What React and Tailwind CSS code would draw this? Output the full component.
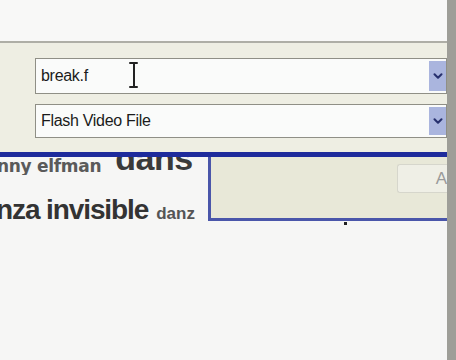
import { ChevronDown } from "lucide-react";

function Combo({ value, cursor, h }) {
  return (
    <div
      className={`flex items-stretch border border-[#8f8f86] bg-[#fafbfa] ${h}`}
    >
      <div className="relative flex flex-1 items-center pl-[5px] text-[16px] text-[#1b1b1b] tracking-[-0.3px]">
        {value}
        {cursor && (
          <span className="absolute left-[93px] top-[3px] flex h-[26px] w-[9px] flex-col items-center">
            <span className="h-[2px] w-[9px] rounded-full bg-[#222]" />
            <span className="w-[2px] flex-1 bg-[#222]" />
            <span className="h-[2px] w-[9px] rounded-full bg-[#222]" />
          </span>
        )}
      </div>
      <div className="my-[2px] flex w-[17px] items-center justify-center bg-[#aab5de]">
        <ChevronDown className="h-[14px] w-[14px] text-[#27306e]" strokeWidth={3.5} />
      </div>
    </div>
  );
}

export default function App() {
  return (
    <div
      className="flex h-[360px] w-[456px] overflow-hidden bg-[#f6f6f5]"
      style={{ fontFamily: '"Liberation Sans", Arial, sans-serif' }}
    >
      <div className="flex w-[447px] flex-col">
        <div className="h-[41px] bg-[#f8f8f7]" />
        <div className="h-[2px] bg-[#aeaea6]" />
        <div className="flex h-[109px] flex-col gap-[10px] bg-[#eeeee3] pl-[35px] pt-[15px]">
          <Combo value="break.f" cursor h="h-[36px]" />
          <Combo value="Flash Video File" h="h-[34px]" />
        </div>
        <div className="h-[5px] bg-[#1e2b9c]" />
        <div className="flex">
          <div className="flex w-[208px] flex-col overflow-hidden font-bold">
            <div className="flex h-[18px] items-end overflow-hidden whitespace-nowrap leading-none">
              <span
                className="ml-[-3px] text-[17px] text-[#5a5a5a] tracking-[-0.3px]"
                style={{ fontFamily: '"DejaVu Sans", sans-serif' }}
              >
                nny elfman
              </span>
              <span className="ml-[14px] mb-0 text-[34px] text-[#3a3a3a] tracking-[-0.5px]">dans</span>
            </div>
            <div className="mt-[21px] flex items-end whitespace-nowrap leading-none">
              <span className="ml-[-4px] text-[28px] text-[#333] tracking-[-1.1px]">nza invisible</span>
              <span className="ml-[8px] mb-[2px] text-[17px] text-[#555]">danz</span>
            </div>
          </div>
          <div className="flex flex-1 flex-col">
            <div className="flex h-[64px] border-b-[3px] border-l-[3px] border-[#4a56aa] bg-[#e8e8d8] pt-[7px]">
              <div className="flex-1" />
              <div className="flex h-[29px] w-[50px] items-center justify-end rounded-l-[3px] border border-r-0 border-[#d6d6cc] bg-[#efefe6] text-[17px] text-[#9a9a9a]">
                A
              </div>
            </div>
            <div className="ml-[136px] mt-[1px] h-[3px] w-[3px] bg-[#222]" />
          </div>
        </div>
      </div>
      <div className="w-[9px] bg-[#9e9e98]" />
    </div>
  );
}
